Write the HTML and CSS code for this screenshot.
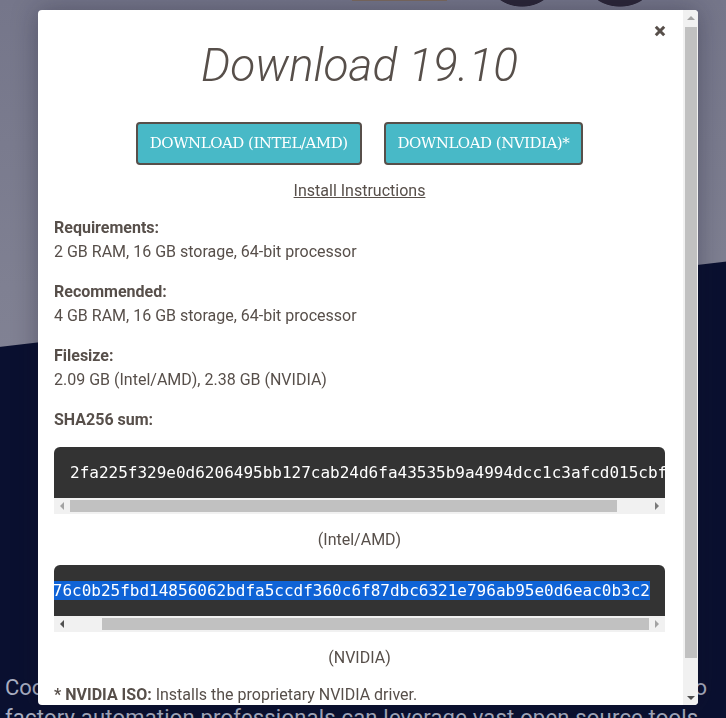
FILE: index.html
```html
<!DOCTYPE html>
<html lang="en">
<head>
<meta charset="utf-8">
<title>Download 19.10</title>
<link rel="stylesheet" href="styles.css">
</head>
<body>
<main class="page">
  <section class="hero"></section>
  <p class="intro">
    <span class="intro-line intro-line--full">Cooperative robots and machine vision reshape industry, so</span>
    <span class="intro-line intro-line--second">factory automation professionals can leverage vast open source tools</span>
  </p>
</main>

<div class="modal" role="dialog" aria-label="Download 19.10">
  <button class="modal-close" type="button" aria-label="Close">
    <svg width="12" height="12" viewBox="0 0 12 12" aria-hidden="true"><path d="M1.8 1.8 L10.2 10.2 M10.2 1.8 L1.8 10.2" stroke="#574f4a" stroke-width="3" fill="none"/></svg>
  </button>

  <div class="modal-body">
    <h1 class="modal-title">Download 19.10</h1>
    <div class="download-buttons">
      <a class="btn" href="#">DOWNLOAD (INTEL/AMD)</a>
      <a class="btn" href="#">DOWNLOAD (NVIDIA)*</a>
    </div>
    <p class="install-link"><a href="#">Install Instructions</a></p>
    <p class="spec"><strong>Requirements:</strong><br>2 GB RAM, 16 GB storage, 64-bit processor</p>
    <p class="spec"><strong>Recommended:</strong><br>4 GB RAM, 16 GB storage, 64-bit processor</p>
    <p class="spec"><strong>Filesize:</strong><br>2.09 GB (Intel/AMD), 2.38 GB (NVIDIA)</p>
    <p class="spec spec--sha"><strong>SHA256 sum:</strong></p>

    <div class="code-block code-block--start">
      <pre class="hash">2fa225f329e0d6206495bb127cab24d6fa43535b9a4994dcc1c3afcd015cbf3e</pre>
      <div class="hscroll" aria-hidden="true">
        <span class="sb-btn sb-btn--left"></span>
        <span class="hscroll-track"><span class="hscroll-thumb"></span></span>
        <span class="sb-btn sb-btn--right"></span>
      </div>
    </div>
    <p class="hash-caption">(Intel/AMD)</p>

    <div class="code-block code-block--end">
      <pre class="hash"><span class="selected">a176c0b25fbd14856062bdfa5ccdf360c6f87dbc6321e796ab95e0d6eac0b3c2</span></pre>
      <div class="hscroll" aria-hidden="true">
        <span class="sb-btn sb-btn--left"></span>
        <span class="hscroll-track"><span class="hscroll-thumb"></span></span>
        <span class="sb-btn sb-btn--right"></span>
      </div>
    </div>
    <p class="hash-caption">(NVIDIA)</p>

    <p class="note"><strong>* NVIDIA ISO:</strong> Installs the proprietary NVIDIA driver.</p>
  </div>

  <div class="vscroll" aria-hidden="true">
    <span class="sb-btn sb-btn--up"></span>
    <span class="vscroll-track"><span class="vscroll-thumb"></span></span>
    <span class="sb-btn sb-btn--down"></span>
  </div>
</div>
</body>
</html>
```
FILE: styles.css
```css
* { box-sizing: border-box; }

html, body {
  margin: 0;
  height: 100%;
}

body {
  font-family: Roboto, "Liberation Sans", sans-serif;
  color: #574f4a;
  overflow: hidden;
  background:
    radial-gradient(ellipse 33px 26px at 522px -19px, #2b2638 97%, rgba(43, 38, 56, 0) 100%),
    radial-gradient(ellipse 34px 26px at 620px -19px, #2b2638 97%, rgba(43, 38, 56, 0) 100%),
    linear-gradient(#7b6a5f, #7b6a5f) 352px 0 / 95px 1px no-repeat,
    linear-gradient(173.3deg, rgba(10, 16, 48, 0) 344px, #0a1030 345px),
    linear-gradient(180deg, #75768a 0, #7f8092 40%, #8a8b9b 100%);
}

.page {
  margin: 0;
}

.hero {
  height: 673px;
}

.intro {
  margin: 0;
  padding: 0 19px 0 5px;
  font-size: 22px;
  line-height: 30px;
  color: #a9aec1;
}

.intro-line {
  display: block;
  white-space: nowrap;
}

.intro-line--full {
  text-align: justify;
  text-align-last: justify;
}

.intro-line--second {
  letter-spacing: 0.2px;
}

/* Modal */
.modal {
  position: fixed;
  top: 10px;
  left: 38px;
  width: 660px;
  height: 695px;
  display: flex;
  background: #fff;
  border-radius: 4px;
  overflow: hidden;
  box-shadow: 0 0 26px rgba(20, 20, 40, 0.35);
}

.modal-body {
  flex: 1;
  min-width: 0;
  overflow: hidden;
  padding: 24px 18px 20px 16px;
  font-size: 16px;
  line-height: 24px;
}

.modal-close {
  position: absolute;
  top: 15px;
  right: 32px;
  width: 12px;
  height: 12px;
  padding: 0;
  border: 0;
  background: none;
  cursor: pointer;
  display: flex;
}

.modal-title {
  margin: 0 0 26px;
  text-align: center;
  font-size: 46px;
  line-height: 62px;
  font-weight: 300;
  font-style: italic;
  color: #574f4a;
}

.download-buttons {
  display: flex;
  justify-content: center;
  gap: 22px;
}

.btn {
  display: block;
  background: #48b9c7;
  color: #fff;
  border: 2px solid #574f4a;
  border-radius: 4px;
  padding: 11px 12px;
  font-family: "DejaVu Serif", "Liberation Serif", serif;
  font-size: 15px;
  letter-spacing: -0.5px;
  line-height: 17px;
  text-decoration: none;
}

.install-link {
  margin: 14px 0 13px;
  text-align: center;
}

.install-link a {
  color: #574f4a;
  text-decoration: underline;
}

.spec {
  margin: 0 0 16px;
}

.spec strong,
.note strong {
  font-weight: 700;
}

.spec--sha {
  margin-bottom: 15px;
}

/* Code blocks with horizontal scrollbar */
.code-block {
  margin: 0 0 14px;
}

.hash {
  margin: 0;
  padding: 16px;
  background: #333;
  color: #fff;
  font-family: "DejaVu Sans Mono", monospace;
  font-size: 16px;
  line-height: normal;
  white-space: pre;
  overflow: hidden;
  border-radius: 6px 6px 0 0;
}

.code-block--end .hash {
  direction: rtl;
  padding-right: 15px;
}

.selected {
  background: #0f63d6;
  color: #fff;
}

.hash-caption {
  margin: 0 0 13px;
  text-align: center;
}

.note {
  margin: 0 0 16px;
}

/* Drawn scrollbars */
.hscroll {
  display: flex;
  height: 16px;
  background: #f1f1f1;
}

.hscroll-track {
  flex: 1;
  display: flex;
  padding: 2px 0;
}

.hscroll-thumb {
  width: 547px;
  background: #c1c1c1;
}

.code-block--end .hscroll-thumb {
  margin-left: auto;
}

.vscroll {
  width: 15px;
  flex: none;
  display: flex;
  flex-direction: column;
  background: #f1f1f1;
}

.vscroll-track {
  flex: 1;
  display: flex;
  flex-direction: column;
  padding: 2px 1px 0 2px;
}

.vscroll-thumb {
  height: 631px;
  background: #c1c1c1;
}

.sb-btn {
  flex: none;
  width: 16px;
  height: 16px;
  display: flex;
  align-items: center;
  justify-content: center;
}

.vscroll .sb-btn {
  width: 15px;
  height: 15px;
}

.sb-btn::before {
  content: "";
  width: 0;
  height: 0;
  border: 0 solid transparent;
}

.sb-btn--up::before {
  border-width: 0 4px 4px;
  border-bottom-color: #a3a3a3;
}

.sb-btn--down::before {
  border-width: 4px 4px 0;
  border-top-color: #505050;
}

.sb-btn--left::before {
  border-width: 4px 4px 4px 0;
  border-right-color: var(--left-arrow);
}

.sb-btn--right::before {
  border-width: 4px 0 4px 4px;
  border-left-color: var(--right-arrow);
}

.code-block--start {
  --left-arrow: #a3a3a3;
  --right-arrow: #7a7a7a;
}

.code-block--end {
  --left-arrow: #505050;
  --right-arrow: #a3a3a3;
}
```
